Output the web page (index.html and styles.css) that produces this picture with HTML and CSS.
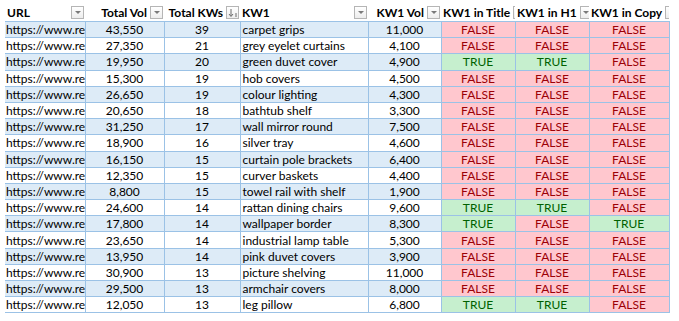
FILE: index.html
```html
<!DOCTYPE html>
<html>
<head>
<meta charset="utf-8">
<link rel="stylesheet" href="styles.css">
</head>
<body>
<table class="sheet">
  <colgroup>
    <col class="c-url"><col class="c-tv"><col class="c-tk"><col class="c-kw"><col class="c-kv"><col class="c-b"><col class="c-b"><col class="c-copy">
  </colgroup>
  <thead>
    <tr>
      <th class="left"><div class="hd"><span class="lbl">URL</span><span class="fb"><i class="tri"></i></span></div></th>
      <th><div class="hd right"><span class="lbl">Total Vol</span><span class="fb"><i class="tri"></i></span></div></th>
      <th><div class="hd right"><span class="lbl">Total KWs</span><span class="fb sort"><svg width="10" height="10" viewBox="0 0 10 10"><path d="M3 1v7M1 6l2 2.5L5 6" fill="none" stroke="#6b6b6b" stroke-width="1"/><path d="M7 6h2M7 8h2" stroke="#6b6b6b" stroke-width="1"/></svg></span></div></th>
      <th class="left"><div class="hd"><span class="lbl">KW1</span><span class="fb"><i class="tri"></i></span></div></th>
      <th><div class="hd right"><span class="lbl">KW1 Vol</span><span class="fb"><i class="tri"></i></span></div></th>
      <th class="left"><div class="hd"><span class="lbl">KW1 in Title</span><span class="fb"><i class="tri"></i></span></div></th>
      <th class="left"><div class="hd"><span class="lbl">KW1 in H1</span><span class="fb"><i class="tri"></i></span></div></th>
      <th class="left"><div class="hd"><span class="lbl">KW1 in Copy</span><span class="fb"><i class="tri"></i></span></div></th>
    </tr>
  </thead>
  <tbody>
    <tr><td class="url">https://www.re</td><td>43,550</td><td>39</td><td class="kw">carpet grips</td><td>11,000</td><td class="f">FALSE</td><td class="f">FALSE</td><td class="f">FALSE</td></tr>
    <tr><td class="url">https://www.re</td><td>27,350</td><td>21</td><td class="kw">grey eyelet curtains</td><td>4,100</td><td class="f">FALSE</td><td class="f">FALSE</td><td class="f">FALSE</td></tr>
    <tr><td class="url">https://www.re</td><td>19,950</td><td>20</td><td class="kw">green duvet cover</td><td>4,900</td><td class="t">TRUE</td><td class="t">TRUE</td><td class="f">FALSE</td></tr>
    <tr><td class="url">https://www.re</td><td>15,300</td><td>19</td><td class="kw">hob covers</td><td>4,500</td><td class="f">FALSE</td><td class="f">FALSE</td><td class="f">FALSE</td></tr>
    <tr><td class="url">https://www.re</td><td>26,650</td><td>19</td><td class="kw">colour lighting</td><td>4,300</td><td class="f">FALSE</td><td class="f">FALSE</td><td class="f">FALSE</td></tr>
    <tr><td class="url">https://www.re</td><td>20,650</td><td>18</td><td class="kw">bathtub shelf</td><td>3,300</td><td class="f">FALSE</td><td class="f">FALSE</td><td class="f">FALSE</td></tr>
    <tr><td class="url">https://www.re</td><td>31,250</td><td>17</td><td class="kw">wall mirror round</td><td>7,500</td><td class="f">FALSE</td><td class="f">FALSE</td><td class="f">FALSE</td></tr>
    <tr><td class="url">https://www.re</td><td>18,900</td><td>16</td><td class="kw">silver tray</td><td>4,600</td><td class="f">FALSE</td><td class="f">FALSE</td><td class="f">FALSE</td></tr>
    <tr><td class="url">https://www.re</td><td>16,150</td><td>15</td><td class="kw">curtain pole brackets</td><td>6,400</td><td class="f">FALSE</td><td class="f">FALSE</td><td class="f">FALSE</td></tr>
    <tr><td class="url">https://www.re</td><td>12,350</td><td>15</td><td class="kw">curver baskets</td><td>4,400</td><td class="f">FALSE</td><td class="f">FALSE</td><td class="f">FALSE</td></tr>
    <tr><td class="url">https://www.re</td><td>8,800</td><td>15</td><td class="kw">towel rail with shelf</td><td>1,900</td><td class="f">FALSE</td><td class="f">FALSE</td><td class="f">FALSE</td></tr>
    <tr><td class="url">https://www.re</td><td>24,600</td><td>14</td><td class="kw">rattan dining chairs</td><td>9,600</td><td class="t">TRUE</td><td class="t">TRUE</td><td class="f">FALSE</td></tr>
    <tr><td class="url">https://www.re</td><td>17,800</td><td>14</td><td class="kw">wallpaper border</td><td>8,300</td><td class="t">TRUE</td><td class="f">FALSE</td><td class="t">TRUE</td></tr>
    <tr><td class="url">https://www.re</td><td>23,650</td><td>14</td><td class="kw">industrial lamp table</td><td>5,300</td><td class="f">FALSE</td><td class="f">FALSE</td><td class="f">FALSE</td></tr>
    <tr><td class="url">https://www.re</td><td>13,950</td><td>14</td><td class="kw">pink duvet covers</td><td>3,900</td><td class="f">FALSE</td><td class="f">FALSE</td><td class="f">FALSE</td></tr>
    <tr><td class="url">https://www.re</td><td>30,900</td><td>13</td><td class="kw">picture shelving</td><td>11,000</td><td class="f">FALSE</td><td class="f">FALSE</td><td class="f">FALSE</td></tr>
    <tr><td class="url">https://www.re</td><td>29,500</td><td>13</td><td class="kw">armchair covers</td><td>8,000</td><td class="f">FALSE</td><td class="f">FALSE</td><td class="f">FALSE</td></tr>
    <tr><td class="url">https://www.re</td><td>12,050</td><td>13</td><td class="kw">leg pillow</td><td>6,800</td><td class="t">TRUE</td><td class="t">TRUE</td><td class="f">FALSE</td></tr>
  </tbody>
</table>
</body>
</html>
```
FILE: styles.css
```css
html, body {
  margin: 0;
  padding: 0;
  background: #ffffff;
}
body {
  padding: 4px 0 0 5px;
  font-family: "Lato", "Liberation Sans", sans-serif;
  font-size: 12px;
  color: #000;
}
.sheet {
  border-collapse: collapse;
  table-layout: fixed;
  width: 664px;
}
.c-url { width: 80px; }
.c-tv { width: 79px; }
.c-tk { width: 76px; }
.c-kw { width: 128px; }
.c-kv { width: 73px; }
.c-b { width: 74px; }
.c-copy { width: 80px; }

.sheet th {
  height: 17px;
  padding: 0 1px 0 2px;
  font-weight: 700;
  text-align: left;
  border-bottom: 1px solid #9bc2e6;
  white-space: nowrap;
  overflow: hidden;
}
.hd {
  display: flex;
  align-items: center;
  gap: 3px;
}
.hd .lbl { flex: 1; }
.hd.right .lbl { text-align: right; }
.fb {
  flex: none;
  width: 11px;
  height: 11px;
  border: 1px solid #b5b5b5;
  background: linear-gradient(#ffffff, #ededed);
  display: flex;
  align-items: center;
  justify-content: center;
}
.tri {
  width: 0;
  height: 0;
  border-left: 3px solid transparent;
  border-right: 3px solid transparent;
  border-top: 3px solid #7a7a7a;
}
.sheet td {
  height: 15.2px;
  padding: 0 2px;
  line-height: 15px;
  text-align: center;
  white-space: nowrap;
  overflow: hidden;
  border-bottom: 1px solid #9bc2e6;
  border-right: 1px solid #9bc2e6;
}
.sheet tbody tr:nth-child(odd) td { background: #ddebf7; }
.sheet td.url { text-align: left; padding-left: 1px; text-overflow: clip; }
.sheet td.kw { text-align: left; }
.sheet tbody tr td.f { background: #ffc7ce; color: #9c0006; }
.sheet tbody tr td.t { background: #c6efce; color: #006100; }
```
